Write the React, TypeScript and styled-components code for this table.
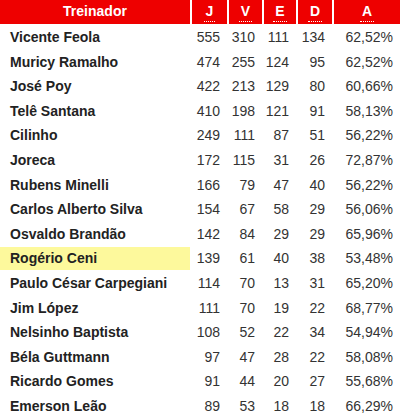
import { FC } from "react";
import styled, { createGlobalStyle } from "styled-components";

type Coach = { name: string; j: number; v: number; e: number; d: number; a: string; highlight?: boolean };

const coaches: Coach[] = [
    { name: "Vicente Feola", j: 555, v: 310, e: 111, d: 134, a: "62,52%" },
    { name: "Muricy Ramalho", j: 474, v: 255, e: 124, d: 95, a: "62,52%" },
    { name: "José Poy", j: 422, v: 213, e: 129, d: 80, a: "60,66%" },
    { name: "Telê Santana", j: 410, v: 198, e: 121, d: 91, a: "58,13%" },
    { name: "Cilinho", j: 249, v: 111, e: 87, d: 51, a: "56,22%" },
    { name: "Joreca", j: 172, v: 115, e: 31, d: 26, a: "72,87%" },
    { name: "Rubens Minelli", j: 166, v: 79, e: 47, d: 40, a: "56,22%" },
    { name: "Carlos Alberto Silva", j: 154, v: 67, e: 58, d: 29, a: "56,06%" },
    { name: "Osvaldo Brandão", j: 142, v: 84, e: 29, d: 29, a: "65,96%" },
    { name: "Rogério Ceni", j: 139, v: 61, e: 40, d: 38, a: "53,48%", highlight: true },
    { name: "Paulo César Carpegiani", j: 114, v: 70, e: 13, d: 31, a: "65,20%" },
    { name: "Jim López", j: 111, v: 70, e: 19, d: 22, a: "68,77%" },
    { name: "Nelsinho Baptista", j: 108, v: 52, e: 22, d: 34, a: "54,94%" },
    { name: "Béla Guttmann", j: 97, v: 47, e: 28, d: 22, a: "58,08%" },
    { name: "Ricardo Gomes", j: 91, v: 44, e: 20, d: 27, a: "55,68%" },
    { name: "Emerson Leão", j: 89, v: 53, e: 18, d: 18, a: "66,29%" },
];

const columns = [
    { key: "J", title: "Jogos", width: 35 },
    { key: "V", title: "Vitórias", width: 33 },
    { key: "E", title: "Empates", width: 32 },
    { key: "D", title: "Derrotas", width: 34 },
    { key: "A", title: "Aproveitamento", width: 66 },
];

const GlobalStyle = createGlobalStyle`
    body {
        margin: 0;
        background: #fff;
        font-family: "Liberation Sans", Arial, sans-serif;
    }
`;

export default function App() {
    return <>
        <GlobalStyle />
        <StatsTable coaches={coaches} />
    </>
}

const StatsTable: FC<{ coaches: Coach[] }> = ({ coaches }) => {
    return <Table>
        <colgroup>
            <col style={{ width: 190 }} />
            {columns.map(c => <col key={c.key} style={{ width: c.width }} />)}
        </colgroup>
        <thead>
            <tr>
                <HeadCell>Treinador</HeadCell>
                {columns.map(c => <HeadCell key={c.key}><Abbr title={c.title}>{c.key}</Abbr></HeadCell>)}
            </tr>
        </thead>
        <tbody>
            {coaches.map(c => <tr key={c.name}>
                <NameCell highlight={c.highlight}>{c.name}</NameCell>
                <NumCell>{c.j}</NumCell>
                <NumCell>{c.v}</NumCell>
                <NumCell>{c.e}</NumCell>
                <NumCell>{c.d}</NumCell>
                <NumCell>{c.a}</NumCell>
            </tr>)}
        </tbody>
    </Table>
}

const Table = styled.table`
    table-layout: fixed;
    width: 404px;
    margin: -2px 0 0 -2px;
    border-collapse: separate;
    border-spacing: 2px;
    font-size: 14px;
`;

const HeadCell = styled.th`
    height: 24px;
    padding: 0;
    background: #ee0000;
    color: #fff;
    font-weight: bold;
    text-align: center;
    line-height: 22px;
    vertical-align: top;
`;

const Abbr = styled.abbr`
    display: inline-block;
    padding: 0 2px;
    line-height: 19px;
    text-decoration: none;
    border-bottom: 1px dotted #fff;
`;

const NameCell = styled.td<{ highlight?: boolean }>`
    padding: 2px 4px 2px 10px;
    line-height: 18.6px;
    font-weight: bold;
    color: #222;
    white-space: nowrap;
    background: ${props => props.highlight ? "#fdf99c" : "transparent"};
`;

const NumCell = styled.td`
    padding: 2px 7px 2px 0;
    line-height: 18.6px;
    text-align: right;
    color: #333;
    white-space: nowrap;
`;
